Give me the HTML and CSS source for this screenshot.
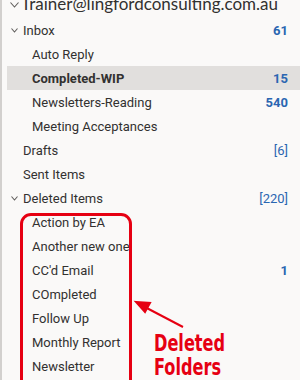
FILE: index.html
```html
<!DOCTYPE html>
<html>
<head>
  <meta charset="UTF-8">
  <title>Folders</title>
  <link rel="stylesheet" href="styles.css">
</head>
<body>
  <div class="pane">
    <div class="acct">
      <svg class="chev big" width="9" height="6" viewBox="0 0 9 6"><polyline points="0.5,0.5 4.5,5 8.5,0.5"/></svg>
      <span>Trainer@lingfordconsulting.com.au</span>
    </div>

    <div class="tree">
      <div class="row top">
        <svg class="chev" width="7" height="5" viewBox="0 0 7 5"><polyline points="0.5,0.5 3.5,4 6.5,0.5"/></svg>
        <span class="name">Inbox</span><span class="count">61</span>
      </div>
      <div class="row sub"><span class="name">Auto Reply</span></div>
      <div class="row sub sel"><span class="name">Completed-WIP</span><span class="count">15</span></div>
      <div class="row sub"><span class="name">Newsletters-Reading</span><span class="count">540</span></div>
      <div class="row sub"><span class="name">Meeting Acceptances</span></div>
      <div class="row top"><span class="name">Drafts</span><span class="count thin">[6]</span></div>
      <div class="row top"><span class="name">Sent Items</span></div>
      <div class="row top">
        <svg class="chev" width="7" height="5" viewBox="0 0 7 5"><polyline points="0.5,0.5 3.5,4 6.5,0.5"/></svg>
        <span class="name">Deleted Items</span><span class="count thin">[220]</span>
      </div>
      <div class="row sub"><span class="name">Action by EA</span></div>
      <div class="row sub"><span class="name">Another new one</span></div>
      <div class="row sub"><span class="name">CC'd Email</span><span class="count">1</span></div>
      <div class="row sub"><span class="name">COmpleted</span></div>
      <div class="row sub"><span class="name">Follow Up</span></div>
      <div class="row sub"><span class="name">Monthly Report</span></div>
      <div class="row sub"><span class="name">Newsletter</span></div>
    </div>

    <!-- annotation drawn over the list -->
    <div class="mark"></div>
    <svg class="arrow" width="60" height="40" viewBox="0 0 60 40">
      <line x1="50" y1="29" x2="8" y2="7"/>
      <polygon points="3,4 17,5 12,14"/>
    </svg>
    <div class="note">Deleted<br>Folders</div>
  </div>
</body>
</html>
```

FILE: styles.css
```css
* {
  box-sizing: border-box;
}
body {
  margin: 0;
  background: #faf9f8;
  font-family: Roboto, "Open Sans", sans-serif;
  color: #323130;
  overflow: hidden;
}

.pane {
  position: relative;
  height: 380px;
  border-left: 2px solid #d2d0ce;
  background: #faf9f8;
  overflow: hidden;
}

.acct {
  display: flex;
  align-items: center;
  height: 24px;
  margin-top: -8px;
  padding-left: 8px;
  font-family: Lato, Roboto, sans-serif;
  font-size: 17px;
  line-height: 24px;
  color: #323130;
  white-space: nowrap;
}
.acct span {
  margin-left: 2px;
}

.chev {
  fill: none;
  stroke: #605e5c;
  stroke-width: 1.1;
}
.chev.big {
  margin-top: 2px;
}

.tree {
  margin-top: 2px;
  padding-left: 5px;
}

.row {
  display: flex;
  align-items: center;
  height: 24px;
  padding-right: 12px;
  font-size: 13px;
  white-space: nowrap;
}
.row.top {
  padding-left: 16px;
}
.row.top .chev {
  margin-left: -12px;
  margin-right: 5px;
}
.row.sub {
  padding-left: 25px;
}
.row.sel {
  background: #e1dfdd;
}
.row.sel .name {
  font-weight: bold;
}

.count {
  margin-left: auto;
  color: #2a66b1;
  font-weight: bold;
}
.count.thin {
  font-weight: normal;
}

.mark {
  position: absolute;
  left: 18px;
  top: 213px;
  width: 112px;
  height: 200px;
  border: 3px solid #e60012;
  border-radius: 11px;
}

.arrow {
  position: absolute;
  left: 131px;
  top: 298px;
  stroke: #e60012;
  stroke-width: 2;
  fill: #e60012;
}

.note {
  position: absolute;
  left: 152px;
  top: 331px;
  font-family: "DejaVu Sans Condensed", "DejaVu Sans", sans-serif;
  font-weight: bold;
  font-size: 23px;
  line-height: 24px;
  color: #e60012;
  transform: scaleX(0.78);
  transform-origin: left top;
}
```
